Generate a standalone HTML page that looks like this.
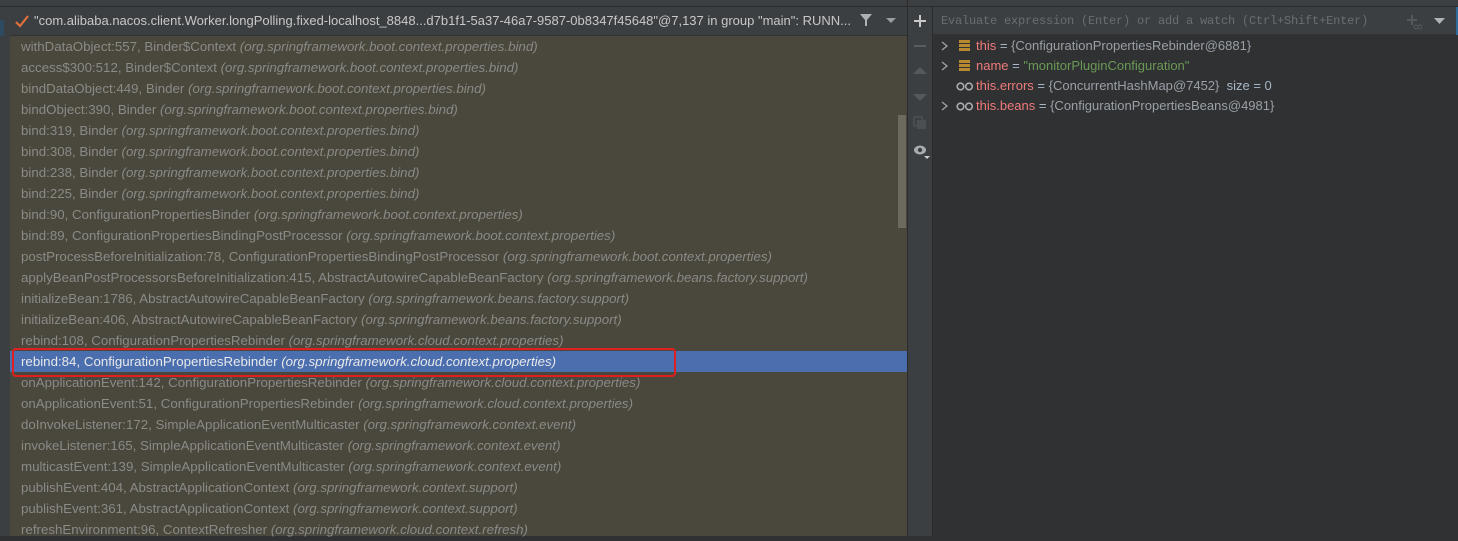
<!DOCTYPE html>
<html><head><style>
*{margin:0;padding:0;box-sizing:border-box}
body{width:1458px;height:536px;overflow:hidden;background:#2f3133;font-family:"Liberation Sans","DejaVu Sans",sans-serif;font-size:13.3px;position:relative}
.abs{position:absolute}
.row{position:absolute;left:10px;width:888px;height:21px;line-height:22px;padding-left:11px;color:#8a8a87;white-space:nowrap}
.row i{color:#8a8a87}
.sel{background:#4b6eaf;color:#e8e8e8;width:897px}
.sel i{color:#e8e8e8}
.v{position:absolute;height:20px;line-height:22px;white-space:nowrap;color:#a9b7c6;font-size:13px}
.n{color:#f07a7a}
.g{color:#9aa0a6}
</style></head><body>
<div class="abs" style="left:0;top:0;width:1458px;height:7px;background:#3c3f41;border-bottom:1px solid #2b2b2b"></div>
<div class="abs" style="left:0;top:7px;width:10px;height:529px;background:#3c3f41"></div>
<div class="abs" style="left:0;top:20px;width:4px;height:16px;background:#2d4a63"></div>
<div class="abs" style="left:10px;top:7px;width:897px;height:29px;background:#3c3f41;border-bottom:1px solid #323232"></div>
<svg class="abs" style="left:14px;top:14px" width="16" height="14"><path d="M2 8 L6 12 L14 2" stroke="#e0703a" stroke-width="2.2" fill="none"/></svg>
<div class="abs" style="left:34px;top:13px;color:#c8c8c8;font-size:13px;white-space:nowrap">"com.alibaba.nacos.client.Worker.longPolling.fixed-localhost_8848...d7b1f1-5a37-46a7-9587-0b8347f45648"@7,137 in group "main": RUNN...</div>
<svg class="abs" style="left:859px;top:13px" width="14" height="14"><path d="M1 1 H13 L8 7 V13 H6 V7 Z" fill="#aeb1b4"/></svg>
<svg class="abs" style="left:886px;top:18px" width="10" height="6"><path d="M0 0 H10 L5 5Z" fill="#9a9da0"/></svg>
<div class="abs" style="left:10px;top:36px;width:897px;height:500px;background:#4a473c"></div>
<div class="row" style="top:36px">withDataObject:557, Binder$Context <i>(org.springframework.boot.context.properties.bind)</i></div>
<div class="row" style="top:57px">access$300:512, Binder$Context <i>(org.springframework.boot.context.properties.bind)</i></div>
<div class="row" style="top:78px">bindDataObject:449, Binder <i>(org.springframework.boot.context.properties.bind)</i></div>
<div class="row" style="top:99px">bindObject:390, Binder <i>(org.springframework.boot.context.properties.bind)</i></div>
<div class="row" style="top:120px">bind:319, Binder <i>(org.springframework.boot.context.properties.bind)</i></div>
<div class="row" style="top:141px">bind:308, Binder <i>(org.springframework.boot.context.properties.bind)</i></div>
<div class="row" style="top:162px">bind:238, Binder <i>(org.springframework.boot.context.properties.bind)</i></div>
<div class="row" style="top:183px">bind:225, Binder <i>(org.springframework.boot.context.properties.bind)</i></div>
<div class="row" style="top:204px">bind:90, ConfigurationPropertiesBinder <i>(org.springframework.boot.context.properties)</i></div>
<div class="row" style="top:225px">bind:89, ConfigurationPropertiesBindingPostProcessor <i>(org.springframework.boot.context.properties)</i></div>
<div class="row" style="top:246px">postProcessBeforeInitialization:78, ConfigurationPropertiesBindingPostProcessor <i>(org.springframework.boot.context.properties)</i></div>
<div class="row" style="top:267px">applyBeanPostProcessorsBeforeInitialization:415, AbstractAutowireCapableBeanFactory <i>(org.springframework.beans.factory.support)</i></div>
<div class="row" style="top:288px">initializeBean:1786, AbstractAutowireCapableBeanFactory <i>(org.springframework.beans.factory.support)</i></div>
<div class="row" style="top:309px">initializeBean:406, AbstractAutowireCapableBeanFactory <i>(org.springframework.beans.factory.support)</i></div>
<div class="row" style="top:330px">rebind:108, ConfigurationPropertiesRebinder <i>(org.springframework.cloud.context.properties)</i></div>
<div class="row sel" style="top:351px">rebind:84, ConfigurationPropertiesRebinder <i>(org.springframework.cloud.context.properties)</i></div>
<div class="row" style="top:372px">onApplicationEvent:142, ConfigurationPropertiesRebinder <i>(org.springframework.cloud.context.properties)</i></div>
<div class="row" style="top:393px">onApplicationEvent:51, ConfigurationPropertiesRebinder <i>(org.springframework.cloud.context.properties)</i></div>
<div class="row" style="top:414px">doInvokeListener:172, SimpleApplicationEventMulticaster <i>(org.springframework.context.event)</i></div>
<div class="row" style="top:435px">invokeListener:165, SimpleApplicationEventMulticaster <i>(org.springframework.context.event)</i></div>
<div class="row" style="top:456px">multicastEvent:139, SimpleApplicationEventMulticaster <i>(org.springframework.context.event)</i></div>
<div class="row" style="top:477px">publishEvent:404, AbstractApplicationContext <i>(org.springframework.context.support)</i></div>
<div class="row" style="top:498px">publishEvent:361, AbstractApplicationContext <i>(org.springframework.context.support)</i></div>
<div class="row" style="top:519px">refreshEnvironment:96, ContextRefresher <i>(org.springframework.cloud.context.refresh)</i></div>
<div class="abs" style="left:12px;top:348px;width:664px;height:29px;border:2px solid #e02020;border-radius:4px"></div>
<div class="abs" style="left:898px;top:115px;width:8px;height:113px;background:#6b6960"></div>
<div class="abs" style="left:907px;top:0;width:1px;height:536px;background:#2b2b2b"></div>
<div class="abs" style="left:908px;top:7px;width:24px;height:529px;background:#3c3f41"></div>
<div class="abs" style="left:932px;top:7px;width:1px;height:529px;background:#2b2b2b"></div>
<svg class="abs" style="left:913px;top:14px" width="14" height="14"><path d="M7 1V13M1 7H13" stroke="#c8c8c8" stroke-width="2"/></svg>
<svg class="abs" style="left:914px;top:44px" width="12" height="4"><path d="M0 2H12" stroke="#5a5d60" stroke-width="2"/></svg>
<svg class="abs" style="left:913px;top:67px" width="14" height="8"><path d="M0 7L7 0L14 7Z" fill="#55585b"/></svg>
<svg class="abs" style="left:913px;top:94px" width="14" height="8"><path d="M0 0L7 7L14 0Z" fill="#55585b"/></svg>
<svg class="abs" style="left:913px;top:116px" width="14" height="14"><rect x="1" y="1" width="8" height="9" fill="none" stroke="#55585b"/><rect x="4" y="4" width="9" height="9" fill="#4c4f52"/></svg>
<svg class="abs" style="left:913px;top:144px" width="18" height="16"><ellipse cx="7" cy="6" rx="6" ry="4.5" fill="#a9acaf"/><circle cx="7" cy="6" r="2.2" fill="#3c3f41"/><path d="M11 12H17L14 15Z" fill="#ccc"/></svg>
<div class="abs" style="left:933px;top:7px;width:525px;height:28px;background:#3c3f41;border-bottom:1px solid #323232"></div>
<div class="abs" style="left:941px;top:14px;color:#6a6d70;font-family:'Liberation Mono',monospace;font-size:12px;white-space:nowrap;letter-spacing:-0.2px">Evaluate expression (Enter) or add a watch (Ctrl+Shift+Enter)</div>
<svg class="abs" style="left:1406px;top:14px" width="16" height="16"><path d="M6 1V11M1 6H11" stroke="#55585b" stroke-width="2"/><circle cx="10" cy="13" r="2" fill="none" stroke="#55585b"/><circle cx="14" cy="13" r="2" fill="none" stroke="#55585b"/></svg>
<svg class="abs" style="left:1434px;top:18px" width="11" height="6"><path d="M0 0H11L5.5 6Z" fill="#b0b3b6"/></svg>
<div class="abs" style="left:1456px;top:7px;width:2px;height:28px;background:#2f6b9a"></div>
<svg class="abs" style="left:941px;top:41px" width="8" height="10"><path d="M1 1L6 5L1 9" stroke="#a0a3a6" fill="none" stroke-width="1.3"/></svg>
<svg class="abs" style="left:959px;top:40px" width="12" height="12"><rect x="0" y="0" width="11" height="3" fill="#b8892e"/><rect x="0" y="4" width="11" height="3" fill="#b8892e"/><rect x="0" y="8" width="11" height="3" fill="#b8892e"/></svg>
<div class="v" style="left:976px;top:35px"><span class="n">this</span> = <span class="g">{ConfigurationPropertiesRebinder@6881}</span></div>
<svg class="abs" style="left:941px;top:61px" width="8" height="10"><path d="M1 1L6 5L1 9" stroke="#a0a3a6" fill="none" stroke-width="1.3"/></svg>
<svg class="abs" style="left:959px;top:60px" width="12" height="12"><rect x="0" y="0" width="11" height="3" fill="#b8892e"/><rect x="0" y="4" width="11" height="3" fill="#b8892e"/><rect x="0" y="8" width="11" height="3" fill="#b8892e"/></svg>
<div class="v" style="left:976px;top:55px"><span class="n">name</span> = <span style="color:#6a9955">"monitorPluginConfiguration"</span></div>
<svg class="abs" style="left:956px;top:82px" width="18" height="9"><circle cx="4.5" cy="4.5" r="3.3" fill="none" stroke="#a9acaf" stroke-width="1.6"/><circle cx="13" cy="4.5" r="3.3" fill="none" stroke="#a9acaf" stroke-width="1.6"/></svg>
<div class="v" style="left:976px;top:75px"><span class="n">this.errors</span> = <span class="g">{ConcurrentHashMap@7452}</span>&nbsp; size = 0</div>
<svg class="abs" style="left:941px;top:101px" width="8" height="10"><path d="M1 1L6 5L1 9" stroke="#a0a3a6" fill="none" stroke-width="1.3"/></svg>
<svg class="abs" style="left:956px;top:102px" width="18" height="9"><circle cx="4.5" cy="4.5" r="3.3" fill="none" stroke="#a9acaf" stroke-width="1.6"/><circle cx="13" cy="4.5" r="3.3" fill="none" stroke="#a9acaf" stroke-width="1.6"/></svg>
<div class="v" style="left:976px;top:95px"><span class="n">this.beans</span> = <span class="g">{ConfigurationPropertiesBeans@4981}</span></div>
</body></html>
